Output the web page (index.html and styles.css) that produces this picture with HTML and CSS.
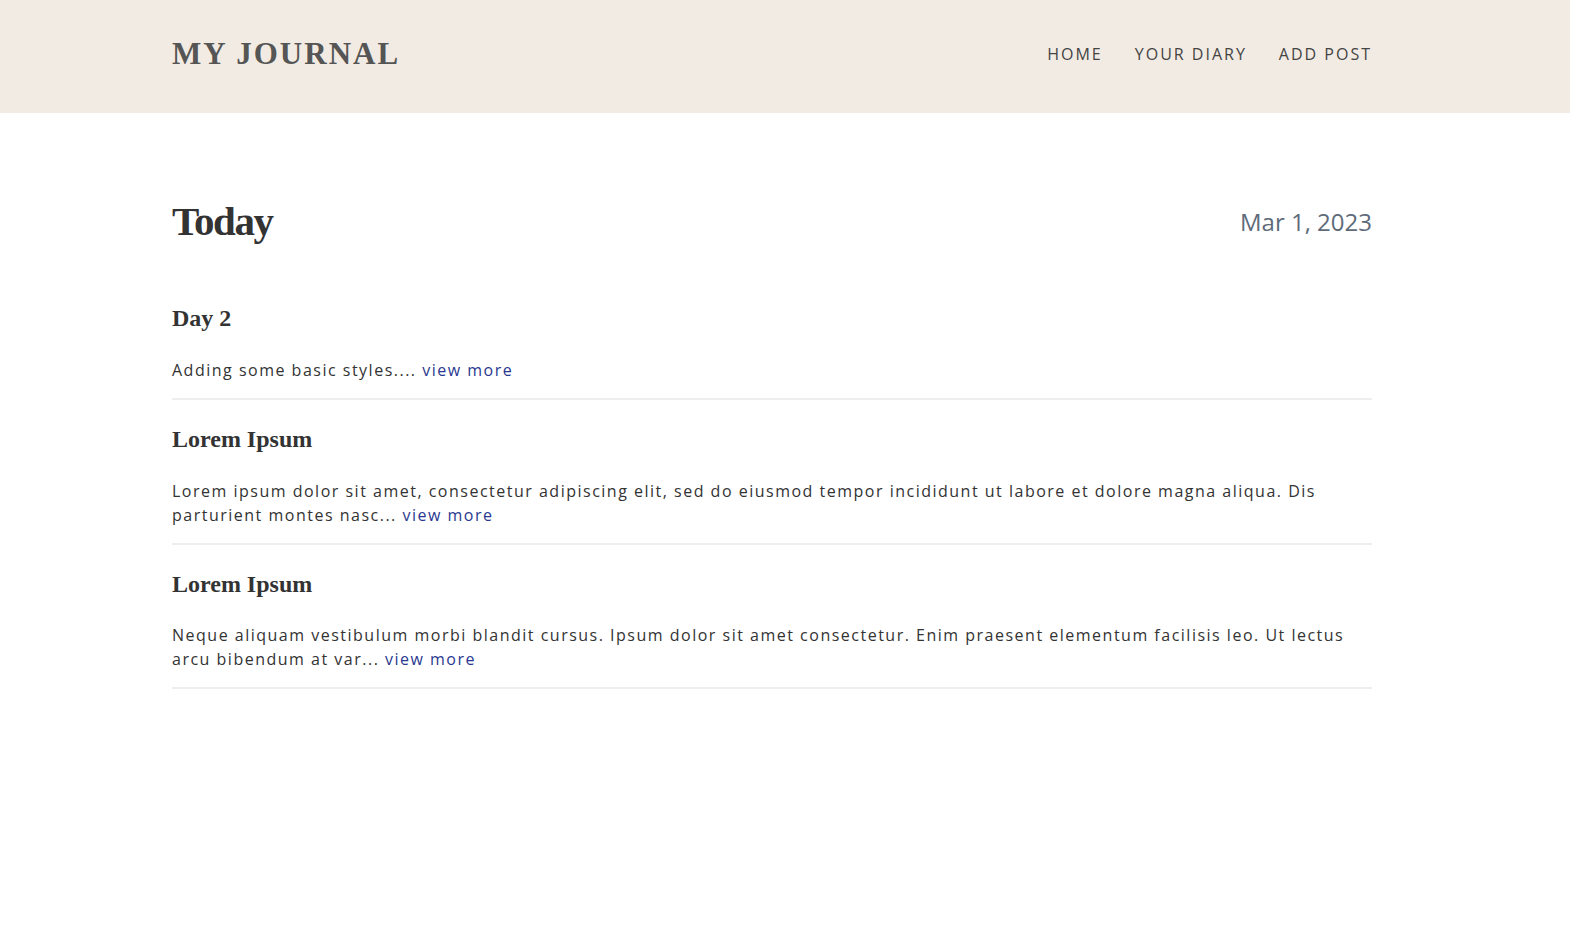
FILE: index.html
```html
<!DOCTYPE html>
<html lang="en">
<head>
<meta charset="utf-8">
<title>My Journal</title>
<link rel="stylesheet" href="styles.css">
</head>
<body>
<header class="site-header">
  <div class="container header-inner">
    <a class="brand" href="#">MY JOURNAL</a>
    <nav class="nav">
      <a href="#">HOME</a>
      <a href="#">YOUR DIARY</a>
      <a href="#">ADD POST</a>
    </nav>
  </div>
</header>
<main class="container main">
  <div class="day-head">
    <h1 class="day-title">Today</h1>
    <span class="day-date">Mar 1, 2023</span>
  </div>
  <article class="post">
    <h2 class="post-title">Day 2</h2>
    <p class="post-body">Adding some basic styles.... <a href="#">view more</a></p>
  </article>
  <article class="post">
    <h2 class="post-title">Lorem Ipsum</h2>
    <p class="post-body">Lorem ipsum dolor sit amet, consectetur adipiscing elit, sed do eiusmod tempor incididunt ut labore et dolore magna aliqua. Dis parturient montes nasc... <a href="#">view more</a></p>
  </article>
  <article class="post">
    <h2 class="post-title">Lorem Ipsum</h2>
    <p class="post-body">Neque aliquam vestibulum morbi blandit cursus. Ipsum dolor sit amet consectetur. Enim praesent elementum facilisis leo. Ut lectus arcu bibendum at var... <a href="#">view more</a></p>
  </article>
</main>
</body>
</html>
```

FILE: styles.css
```css
* { box-sizing: border-box; }
html, body { margin: 0; padding: 0; }
body {
  background: #ffffff;
  font-family: "Open Sans", "Liberation Sans", sans-serif;
  color: #333333;
}
a { text-decoration: none; }

.container {
  width: 1200px;
  margin-left: 172px;
}

.site-header {
  background: #f2ebe3;
  height: 113px;
}
.header-inner {
  height: 100%;
  display: flex;
  align-items: center;
  justify-content: space-between;
  padding-bottom: 6px;
}
.brand {
  font-family: "Liberation Serif", "DejaVu Serif", serif;
  font-weight: bold;
  font-size: 31px;
  letter-spacing: 2px;
  color: #555555;
}
.nav {
  display: flex;
  gap: 32px;
}
.nav a {
  font-size: 16px;
  letter-spacing: 2px;
  color: #444444;
}

.main {
  padding-top: 83px;
}
.day-head {
  display: flex;
  justify-content: space-between;
  align-items: center;
  margin-bottom: 58px;
}
.day-title {
  margin: 0;
  font-family: "Liberation Serif", "DejaVu Serif", serif;
  font-weight: bold;
  font-size: 41px;
  line-height: 50px;
  letter-spacing: -1.5px;
  color: #333333;
}
.day-date {
  font-size: 24px;
  line-height: 32px;
  color: #5f6b7a;
  padding-top: 1px;
}

.post {
  border-bottom: 2px solid #eeeeee;
  padding-bottom: 16px;
  margin-bottom: 25px;
}
.post-title {
  margin: 0 0 25px;
  font-family: "Liberation Serif", "DejaVu Serif", serif;
  font-weight: bold;
  font-size: 24px;
  color: #333333;
  line-height: 1.2;
}
.post-body {
  margin: 0;
  font-size: 16px;
  line-height: 24px;
  letter-spacing: 1.5px;
  color: #333333;
}
.post-body a {
  color: #2a3990;
}
```
